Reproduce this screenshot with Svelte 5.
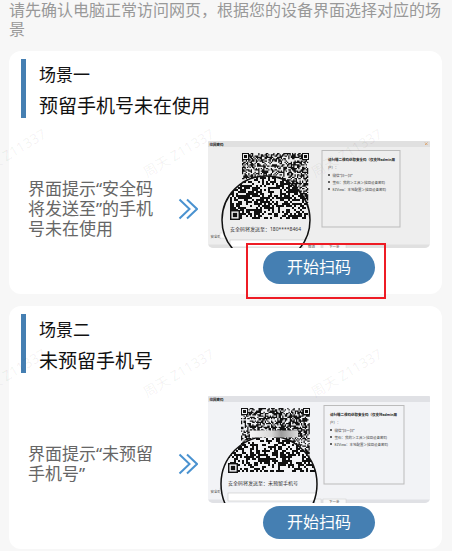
<script>
  // All coordinates of the dialog previews are in a 444 x 214 drawing
  const scenes = [
    {
      id: 'in-use',
      name: '场景一',
      title: '预留手机号未在使用',
      hint: '界面提示“安全码将发送至”的手机号未在使用',
      sentTo: '180****8464',
      marked: true,
      bg: '#eeeeee',
      bar: '#e0e0e0',
      qr: { x: 68, y: 24, w: 134, h: 134 },
      lens: { cx: 116, cy: 158, r: 88 },
      zoomed: { x: 44, y: 68, w: 156, h: 90 },
      field: { x: 44, y: 198, w: 156, h: 14 },
      help: { x: 228, y: 19, w: 156, h: 153 },
      seed: 7
    },
    {
      id: 'not-set',
      name: '场景二',
      title: '未预留手机号',
      hint: '界面提示“未预留手机号”',
      sentTo: '未预留手机号',
      marked: false,
      bg: '#f2f3f6',
      bar: '#e0e1e5',
      qr: { x: 66, y: 24, w: 138, h: 130 },
      lens: { cx: 122, cy: 176, r: 96 },
      zoomed: { x: 40, y: 80, w: 178, h: 74 },
      field: { x: 40, y: 194, w: 184, h: 16 },
      help: { x: 232, y: 19, w: 160, h: 157 },
      seed: 23
    }
  ];

  const helpLines = ['微信“扫一扫”', '萤石：我的＞工具＞找回设备密码', 'EZView：本地配置＞找回设备密码'];

  const marks = [
    { x: -21, y: 178 }, { x: 147, y: 178 }, { x: 315, y: 178 },
    { x: -21, y: 398 }, { x: 147, y: 398 }, { x: 315, y: 398 }
  ];

  // Seeded noise, so the codes look the same on every render
  function modules(area, cell, seed) {
    let state = seed * 7919;
    let d = '';
    for (let y = 0; y + cell <= area.h + 0.1; y += cell) {
      for (let x = 0; x + cell <= area.w + 0.1; x += cell) {
        state = (state * 16807) % 2147483647;
        if (state / 2147483647 < 0.53) {
          d += `M${(area.x + x).toFixed(1)} ${(area.y + y).toFixed(1)}h${cell}v${cell}h-${cell}z`;
        }
      }
    }
    return d;
  }
</script>

{#snippet finder(x, y, size, bg)}
  <rect {x} {y} width={size} height={size} fill={bg} />
  <rect x={x + size / 14} y={y + size / 14} width={size * 6 / 7} height={size * 6 / 7} fill={bg} stroke="#111" stroke-width={size / 7} />
  <rect x={x + size * 2 / 7} y={y + size * 2 / 7} width={size * 3 / 7} height={size * 3 / 7} fill="#111" />
{/snippet}

{#snippet preview(s)}
  <svg class="preview" viewBox="0 0 444 214" role="img" aria-label={s.title}>
    <defs>
      <clipPath id="lens-{s.id}"><circle cx={s.lens.cx} cy={s.lens.cy} r={s.lens.r} /></clipPath>
      <linearGradient id="smear-{s.id}">
        <stop offset="0" stop-color="#f6f6f6" />
        <stop offset="0.45" stop-color="#d8d8d8" />
        <stop offset="0.65" stop-color="#9c9c9c" />
        <stop offset="1" stop-color="#dcdcdc" />
      </linearGradient>
    </defs>
    <rect width="444" height="214" fill={s.bg} />
    <rect width="444" height="12" fill={s.bar} />
    <rect y="207" width="444" height="7" fill={s.bar} />
    <text x="3" y="9" class="tiny bold">找回密码</text>
    {#if s.marked}
      <path d="M434 3l5 5M439 3l-5 5" stroke="#dba878" stroke-width="2" />
    {/if}

    <path d={modules(s.qr, 2.5, s.seed)} fill="#111" />
    {@render finder(s.qr.x, s.qr.y, 14, s.bg)}
    {@render finder(s.qr.x + s.qr.w - 14, s.qr.y, 14, s.bg)}

    <text x="5" y="194" class="tiny">安全码</text>
    <rect x="24" y="184" width="178" height="10" fill="#fff" stroke="#d4d4d4" />
    <rect x="190" y="206" width="36" height="12" fill="#f6f6f6" stroke="#ccc" />
    <text x="200" y="213" class="tiny">取消</text>
    <rect x="230" y="206" width="46" height="12" fill="#f6f6f6" stroke="#ccc" />
    <text x="242" y="213" class="tiny">下一步</text>

    <rect x={s.help.x} y={s.help.y} width={s.help.w} height={s.help.h} fill="none" stroke="#bbb" stroke-width="2" />
    <text x={s.help.x + 12} y={s.help.y + 21} class="tiny bold">请扫描二维码获取安全码（仅支持admin用</text>
    <text x={s.help.x + 12} y={s.help.y + 36} class="tiny">户）：</text>
    {#each helpLines as line, i}
      <circle cx={s.help.x + 14} cy={s.help.y + 49 + i * 14} r="2" fill="#333" />
      <text x={s.help.x + 21} y={s.help.y + 52 + i * 14} class="tiny">{line}</text>
    {/each}

    <g clip-path="url(#lens-{s.id})">
      <circle cx={s.lens.cx} cy={s.lens.cy} r={s.lens.r} fill={s.bg} />
      <path d={modules(s.zoomed, 4, s.seed + 4)} fill="#111" />
      {@render finder(s.zoomed.x, s.zoomed.y + s.zoomed.h - 20, 20, s.bg)}
      <text x={s.zoomed.x} y={s.lens.cy + (s.marked ? 22 : 2)} class="sent">安全码将发送至：{s.sentTo}</text>
      <rect x={s.field.x} y={s.field.y} width={s.field.w} height={s.field.h} fill="#fff" stroke="#bbb" />
    </g>
    <circle cx={s.lens.cx} cy={s.lens.cy} r={s.lens.r} fill="none" stroke="#111" stroke-width="3" />
    {#if !s.marked}
      <rect x="84" y="69" width="96" height="14" fill="url(#smear-{s.id})" />
    {/if}
  </svg>
{/snippet}

<main>
  <p class="intro">请先确认电脑正常访问网页，根据您的设备界面选择对应的场景</p>

  {#each scenes as scene (scene.id)}
    <section class="card">
      <header>
        <p class="name">{scene.name}</p>
        <h2>{scene.title}</h2>
      </header>
      <div class="body">
        <p class="hint">{scene.hint}</p>
        <svg class="arrow" viewBox="0 0 20 22" aria-hidden="true">
          <path d="M1.5 1.5l10 9.5l-10 9.5M9 1.5l10 9.5l-10 9.5" />
        </svg>
        <div class="action">
          {@render preview(scene)}
          <div class="scan" class:marked={scene.marked}>
            <button type="button">开始扫码</button>
          </div>
        </div>
      </div>
    </section>
  {/each}

  <svg class="watermark" aria-hidden="true">
    {#each marks as m}
      <text transform="translate({m.x} {m.y}) rotate(-31)">周天 Z11337</text>
    {/each}
  </svg>
</main>

<style>
  :global(body) {
    margin: 0;
    background: #f7f7f7;
  }
  main {
    position: relative;
    padding: 1px 10px 2px 9px;
    font-family: "Noto Sans", "Noto Sans CJK SC", sans-serif;
    overflow: hidden;
  }
  p, h2 {
    margin: 0;
    font-weight: 400;
  }
  .intro {
    font-size: 16px;
    line-height: 19px;
    color: #999;
  }
  .card {
    margin-top: 12px;
    padding: 8px 12px 10px;
    border-radius: 12px;
    background: #fff;
  }
  header {
    padding-left: 13px;
    border-left: 5px solid #457fb2;
    color: #111;
  }
  .name {
    font-size: 17px;
    line-height: 31px;
  }
  h2 {
    padding-top: 4px;
    font-size: 19px;
    line-height: 24px;
  }
  .body {
    display: grid;
    grid-template-columns: 1fr 20px 222px;
    column-gap: 10px;
    align-items: center;
    margin-top: 23px;
    padding-left: 7px;
  }
  .hint {
    padding-bottom: 8px;
    font-size: 17px;
    line-height: 20px;
    color: #666;
  }
  .arrow {
    width: 20px;
    height: 22px;
    padding-bottom: 8px;
    fill: none;
    stroke: #4a92d0;
    stroke-width: 2;
  }
  .action {
    display: flex;
    flex-direction: column;
    align-items: center;
    gap: 3px;
  }
  .preview {
    display: block;
    width: 100%;
    border-radius: 1px 1px 5px 5px;
  }
  .tiny {
    font-size: 7px;
    fill: #444;
  }
  .bold {
    font-weight: 700;
    fill: #222;
  }
  .sent {
    font-size: 10px;
    fill: #333;
  }
  .scan {
    position: relative;
  }
  /* Red frame that points out the button */
  .marked::after {
    content: "";
    position: absolute;
    inset: -8px -11px -15px -17px;
    border: 2px solid #ee1c25;
    pointer-events: none;
  }
  button {
    display: block;
    width: 112px;
    height: 33px;
    padding: 0;
    border: 0;
    border-radius: 17px;
    background: #457fb2;
    color: #fff;
    font-family: inherit;
    font-size: 16px;
    line-height: 33px;
    cursor: pointer;
  }
  .watermark {
    position: absolute;
    inset: 0;
    width: 100%;
    height: 100%;
    pointer-events: none;
    font-size: 14px;
    fill: rgba(0, 0, 0, 0.06);
  }
</style>
